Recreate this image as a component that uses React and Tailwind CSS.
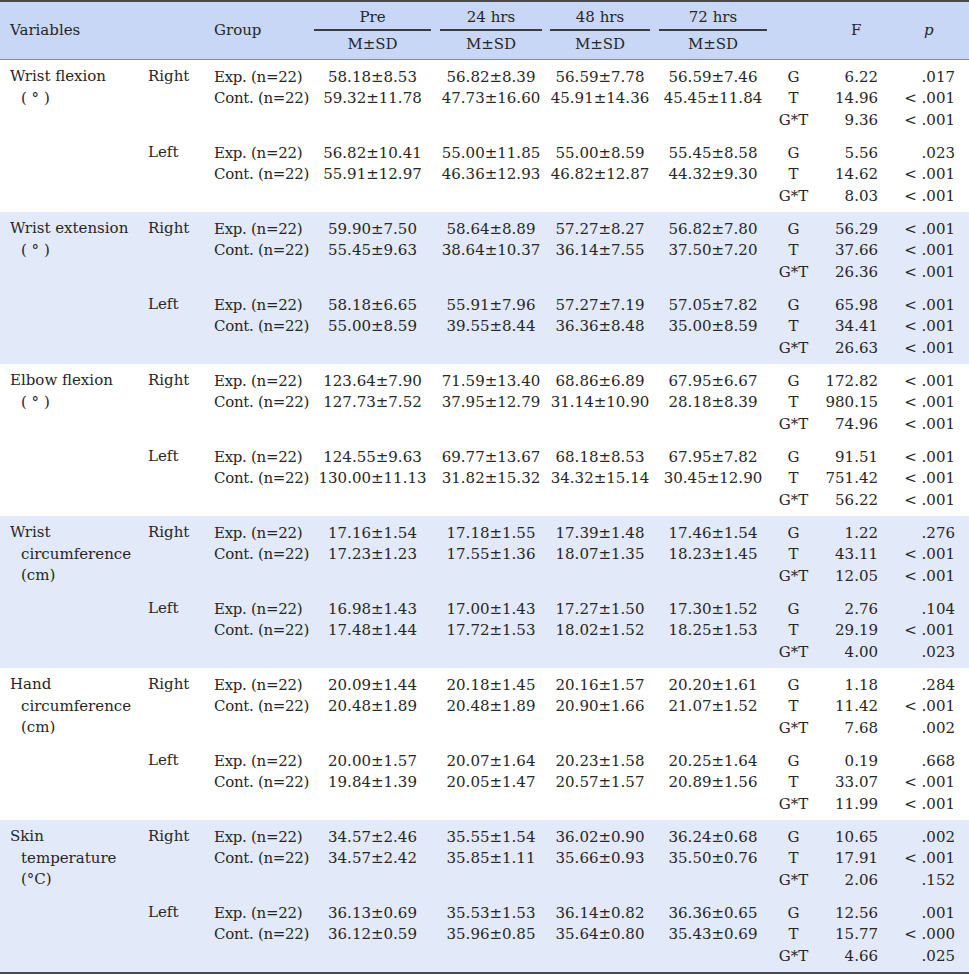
import React from "react";

const sections = [
  {
    name: ["Wrist flexion", "( ° )"],
    blue: false,
    sides: [
      {
        side: "Right",
        exp: ["58.18±8.53", "56.82±8.39", "56.59±7.78", "56.59±7.46"],
        cont: ["59.32±11.78", "47.73±16.60", "45.91±14.36", "45.45±11.84"],
        stats: [["6.22", ".017"], ["14.96", "< .001"], ["9.36", "< .001"]],
      },
      {
        side: "Left",
        exp: ["56.82±10.41", "55.00±11.85", "55.00±8.59", "55.45±8.58"],
        cont: ["55.91±12.97", "46.36±12.93", "46.82±12.87", "44.32±9.30"],
        stats: [["5.56", ".023"], ["14.62", "< .001"], ["8.03", "< .001"]],
      },
    ],
  },
  {
    name: ["Wrist extension", "( ° )"],
    blue: true,
    sides: [
      {
        side: "Right",
        exp: ["59.90±7.50", "58.64±8.89", "57.27±8.27", "56.82±7.80"],
        cont: ["55.45±9.63", "38.64±10.37", "36.14±7.55", "37.50±7.20"],
        stats: [["56.29", "< .001"], ["37.66", "< .001"], ["26.36", "< .001"]],
      },
      {
        side: "Left",
        exp: ["58.18±6.65", "55.91±7.96", "57.27±7.19", "57.05±7.82"],
        cont: ["55.00±8.59", "39.55±8.44", "36.36±8.48", "35.00±8.59"],
        stats: [["65.98", "< .001"], ["34.41", "< .001"], ["26.63", "< .001"]],
      },
    ],
  },
  {
    name: ["Elbow flexion", "( ° )"],
    blue: false,
    sides: [
      {
        side: "Right",
        exp: ["123.64±7.90", "71.59±13.40", "68.86±6.89", "67.95±6.67"],
        cont: ["127.73±7.52", "37.95±12.79", "31.14±10.90", "28.18±8.39"],
        stats: [["172.82", "< .001"], ["980.15", "< .001"], ["74.96", "< .001"]],
      },
      {
        side: "Left",
        exp: ["124.55±9.63", "69.77±13.67", "68.18±8.53", "67.95±7.82"],
        cont: ["130.00±11.13", "31.82±15.32", "34.32±15.14", "30.45±12.90"],
        stats: [["91.51", "< .001"], ["751.42", "< .001"], ["56.22", "< .001"]],
      },
    ],
  },
  {
    name: ["Wrist", "circumference", "(cm)"],
    blue: true,
    sides: [
      {
        side: "Right",
        exp: ["17.16±1.54", "17.18±1.55", "17.39±1.48", "17.46±1.54"],
        cont: ["17.23±1.23", "17.55±1.36", "18.07±1.35", "18.23±1.45"],
        stats: [["1.22", ".276"], ["43.11", "< .001"], ["12.05", "< .001"]],
      },
      {
        side: "Left",
        exp: ["16.98±1.43", "17.00±1.43", "17.27±1.50", "17.30±1.52"],
        cont: ["17.48±1.44", "17.72±1.53", "18.02±1.52", "18.25±1.53"],
        stats: [["2.76", ".104"], ["29.19", "< .001"], ["4.00", ".023"]],
      },
    ],
  },
  {
    name: ["Hand", "circumference", "(cm)"],
    blue: false,
    sides: [
      {
        side: "Right",
        exp: ["20.09±1.44", "20.18±1.45", "20.16±1.57", "20.20±1.61"],
        cont: ["20.48±1.89", "20.48±1.89", "20.90±1.66", "21.07±1.52"],
        stats: [["1.18", ".284"], ["11.42", "< .001"], ["7.68", ".002"]],
      },
      {
        side: "Left",
        exp: ["20.00±1.57", "20.07±1.64", "20.23±1.58", "20.25±1.64"],
        cont: ["19.84±1.39", "20.05±1.47", "20.57±1.57", "20.89±1.56"],
        stats: [["0.19", ".668"], ["33.07", "< .001"], ["11.99", "< .001"]],
      },
    ],
  },
  {
    name: ["Skin", "temperature", "(°C)"],
    blue: true,
    sides: [
      {
        side: "Right",
        exp: ["34.57±2.46", "35.55±1.54", "36.02±0.90", "36.24±0.68"],
        cont: ["34.57±2.42", "35.85±1.11", "35.66±0.93", "35.50±0.76"],
        stats: [["10.65", ".002"], ["17.91", "< .001"], ["2.06", ".152"]],
      },
      {
        side: "Left",
        exp: ["36.13±0.69", "35.53±1.53", "36.14±0.82", "36.36±0.65"],
        cont: ["36.12±0.59", "35.96±0.85", "35.64±0.80", "35.43±0.69"],
        stats: [["12.56", ".001"], ["15.77", "< .000"], ["4.66", ".025"]],
      },
    ],
  },
];

const times = ["Pre", "24 hrs", "48 hrs", "72 hrs"];

// one body line: group, 4 time values, stat label, F, p
const Line = ({ group, values, label, f, p }) => (
  <div className="flex h-[21.7px] items-center whitespace-nowrap">
    <div className="w-[100px] tracking-[-0.3px]">{group}</div>
    <div className="w-[117px] text-center">{values?.[0]}</div>
    <div className="ml-[9px] w-[102px] text-center">{values?.[1]}</div>
    <div className="ml-[8px] w-[100px] text-center">{values?.[2]}</div>
    <div className="ml-[9px] w-[108px] text-center">{values?.[3]}</div>
    <div className="w-[53px] text-center">{label}</div>
    <div className="w-[58px] text-right">{f}</div>
    <div className="w-[77px] text-right">{p}</div>
  </div>
);

const Section = ({ data }) => (
  <div
    className={`flex h-[152px] pt-[6px] ${
      data.blue ? "bg-[#e2e9f9]" : "bg-white"
    }`}
  >
    {/* Variables */}
    <div className="w-[148px] pl-[10px] leading-[21.7px]">
      {data.name.map((line, i) => (
        <div key={i} className={i > 0 ? "pl-[11px]" : ""}>
          {line}
        </div>
      ))}
    </div>

    <div className="flex flex-col gap-[11px]">
      {data.sides.map((s) => (
        <div key={s.side} className="flex">
          <div className="w-[66px] leading-[21.7px]">{s.side}</div>
          <div className="flex flex-col">
            <Line
              group="Exp. (n=22)"
              values={s.exp}
              label="G"
              f={s.stats[0][0]}
              p={s.stats[0][1]}
            />
            <Line
              group="Cont. (n=22)"
              values={s.cont}
              label="T"
              f={s.stats[1][0]}
              p={s.stats[1][1]}
            />
            <Line label="G*T" f={s.stats[2][0]} p={s.stats[2][1]} />
          </div>
        </div>
      ))}
    </div>
  </div>
);

const App = () => {
  return (
    <div className="w-[969px] h-[974px] overflow-hidden bg-white font-['DejaVu_Serif',serif] text-[15px] text-[#262626]">
      {/* Header */}
      <div className="flex h-[60px] border-t-2 border-b border-t-[#4a4a4a] border-b-[#8c8c8c] bg-[#c9d7f6]">
        <div className="w-[148px] pl-[10px] self-center">Variables</div>
        <div className="w-[66px]" />
        <div className="w-[100px] self-center">Group</div>
        {times.map((t, i) => (
          <div
            key={t}
            className={`flex flex-col pt-[4px] text-center leading-[22px] ${
              ["w-[117px]", "ml-[9px] w-[102px]", "ml-[8px] w-[100px]", "ml-[9px] w-[108px]"][i]
            }`}
          >
            <div>{t}</div>
            <div className="mt-[1px] h-[2px] bg-[#3a3a3a]" />
            <div className="mt-[2px]">M±SD</div>
          </div>
        ))}
        <div className="w-[53px]" />
        <div className="w-[58px] pl-[31px] self-center">F</div>
        <div className="w-[77px] pl-[46px] self-center italic">p</div>
      </div>

      {sections.map((s) => (
        <Section key={s.name.join(" ")} data={s} />
      ))}

      <div className="h-[2px] bg-[#4a4a4a]" />
    </div>
  );
};

export default App;
